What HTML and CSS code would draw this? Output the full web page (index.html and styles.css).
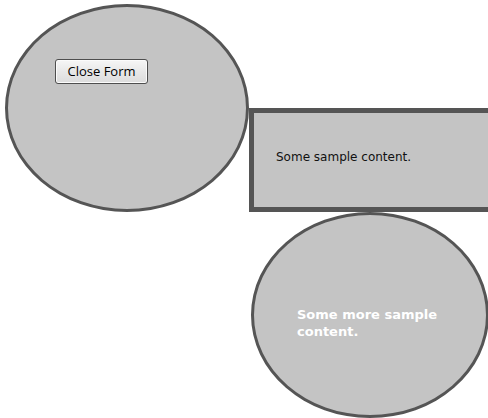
FILE: index.html
```html
<!DOCTYPE html>
<html>
<head>
<meta charset="utf-8">
<link rel="stylesheet" href="styles.css">
</head>
<body>
<div class="canvas">
  <div class="row top">
    <div class="shape ellipse main">
      <button class="btn">Close Form</button>
    </div>
    <div class="shape rect">
      <p class="sample">Some sample content.</p>
    </div>
  </div>
  <div class="row bottom">
    <div class="shape ellipse second">
      <p class="more">Some more sample<br>content.</p>
    </div>
  </div>
</div>
</body>
</html>
```
FILE: styles.css
```css
html, body {
  margin: 0;
  padding: 0;
  background: #ffffff;
  overflow: hidden;
  width: 488px;
  height: 418px;
}
.canvas {
  display: flex;
  flex-direction: column;
  width: 488px;
  height: 418px;
}
.row {
  display: flex;
  flex: none;
}
.shape {
  box-sizing: border-box;
  background: #c4c4c4;
  border: 4px solid #555555;
  flex: none;
}
.ellipse {
  border-radius: 50%;
  border-width: 3px;
}
.main {
  width: 244px;
  height: 208px;
  margin: 4px 0 0 5px;
  padding: 52px 0 0 47px;
}
.btn {
  display: block;
  width: 93px;
  height: 25px;
  margin: 0;
  padding: 0 0 1px 0;
  font-family: "Open Sans", "DejaVu Sans", sans-serif;
  font-size: 13px;
  color: #000;
  background: linear-gradient(#f6f6f6, #e8e8e8 50%, #dcdcdc);
  border: 1px solid #4e4e4e;
  border-radius: 3px;
  box-shadow: inset 0 0 0 1px #fbfbfb;
}
.rect {
  width: 250px;
  height: 104px;
  margin-top: 108px;
  border-width: 5px;
  padding: 37px 0 0 22px;
}
.sample {
  margin: 0;
  font-family: "DejaVu Sans", sans-serif;
  font-size: 12px;
  line-height: 14px;
  color: #111;
}
.second {
  width: 238px;
  height: 206px;
  margin: 0 0 0 251px;
  padding: 91px 0 0 43px;
}
.more {
  margin: 0;
  font-family: "DejaVu Sans", sans-serif;
  font-weight: bold;
  font-size: 13px;
  line-height: 17px;
  color: #ffffff;
}
```
